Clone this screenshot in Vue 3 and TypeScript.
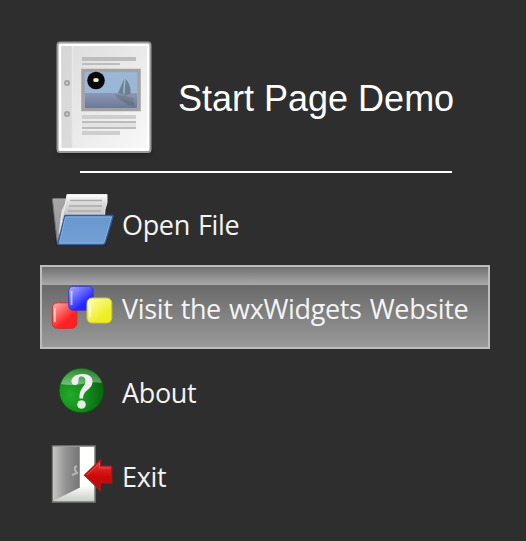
<script setup lang="ts">
type IconName = 'folder' | 'blocks' | 'help' | 'door'

interface StartItem {
  label: string
  icon: IconName
  active?: boolean
}

const items: StartItem[] = [
  { label: 'Open File', icon: 'folder' },
  { label: 'Visit the wxWidgets Website', icon: 'blocks', active: true },
  { label: 'About', icon: 'help' },
  { label: 'Exit', icon: 'door' },
]
</script>

<template>
  <main class="page">
    <header class="header">
      <svg class="logo" viewBox="50 34 108 126">
        <defs>
          <linearGradient id="paper" x1="0" y1="0" x2="1" y2="1">
            <stop offset="0" stop-color="#dcdcdc" />
            <stop offset="1" stop-color="#f8f8f8" />
          </linearGradient>
          <linearGradient id="sea" x1="0" y1="0" x2="0" y2="1">
            <stop offset="0" stop-color="#8c98b8" />
            <stop offset="1" stop-color="#6b7896" />
          </linearGradient>
          <filter id="soft" x="-20%" y="-80%" width="140%" height="260%">
            <feGaussianBlur stdDeviation="2.5" />
          </filter>
        </defs>
        <rect x="59" y="146" width="91" height="9" rx="4" fill="#1a1a1a" filter="url(#soft)" />
        <rect x="57.500" y="42.500" width="93" height="109.500" rx="2.5" fill="#fff" stroke="#999" stroke-width="2" />
        <rect x="61" y="46" width="86" height="102" fill="url(#paper)" />
        <path d="M62 46h10v102H62z" fill="#d2d2d2" opacity=".65" />
        <path d="M72.500 46v102" stroke="#e8e8e8" stroke-width="1.500" />
        <g fill="#dcdcdc" stroke="#a2a2a2" stroke-width="2">
          <circle cx="67" cy="83" r="2" />
          <circle cx="67" cy="114" r="2" />
        </g>
        <path d="M82 57h54v4H82zM82 63h38v2H82zM82 121h54v2H82zM82 127h54v2H82z" fill="#bdbdbd" />
        <path d="M82 115h54v4H82zM82 131h38v4H82z" fill="#cecece" />
        <path d="M82 123h54v4H82z" fill="#e3e3e3" />
        <rect x="83" y="70.500" width="56" height="39" fill="#9bb7d8" stroke="#a2a2a2" stroke-width="3.500" />
        <path d="M85 93h52v15H85z" fill="url(#sea)" />
        <path d="M124 79l-6 14 5 2zM125.500 79c4 4 5.500 9 5 15l-6 2zM114 94l20 4-3 5-11-3z" fill="#71808f" />
        <path d="M120 99l14 3v5l-6-2z" fill="#626f86" opacity=".8" />
        <circle cx="96" cy="80.500" r="8.800" fill="#080808" />
        <ellipse cx="96" cy="80" rx="2.800" ry="2" fill="#e8e8d0" />
      </svg>
      <h1 class="title">Start Page Demo</h1>
    </header>
    <hr class="rule" />

    <nav class="menu">
      <a v-for="item in items" :key="item.label" class="item" :class="{ active: item.active }">
        <svg v-if="item.icon === 'folder'" class="icon" viewBox="50 191 64 64">
          <defs>
            <linearGradient id="folder-back" x1="0" y1="0" x2="1" y2="1">
              <stop offset="0" stop-color="#aaa" />
              <stop offset="1" stop-color="#808080" />
            </linearGradient>
            <linearGradient id="sheet" x1="0" y1="0" x2="0" y2="1">
              <stop offset="0" stop-color="#fff" />
              <stop offset=".35" stop-color="#d8d8d8" />
              <stop offset="1" stop-color="#bbb" />
            </linearGradient>
            <linearGradient id="folder-front" x1="0" y1="0" x2="0" y2="1">
              <stop offset="0" stop-color="#6898cf" />
              <stop offset="1" stop-color="#739fd3" />
            </linearGradient>
          </defs>
          <path d="M56 246h50l2-8H55z" fill="#222" />
          <path d="M52.500 199.500q0-1 1-1h13v8l35 5v6l-42 27h-2z" fill="url(#folder-back)" stroke="#777" />
          <path d="M60 234l3-23 4-8" fill="none" stroke="#ddd" stroke-width="3" />
          <path d="M67 194.500h40l0 8-2 7-1 12H61l4-15z" fill="url(#sheet)" stroke="#eee" />
          <path d="M70 200.500h32M69 206h33M68 211h33" stroke="#aaa" stroke-width="1.500" />
          <path d="M65 215.500h47.500q.5 0 .3 1l-7.800 26.500q-.5 1.500-2 1.500H59q-1.500 0-1-1.500z" fill="url(#folder-front)" stroke="#315f9b" stroke-width="1.500" />
          <path d="M65.500 217h46l-7 24q-.5 2-2 2H59.500z" fill="none" stroke="#85addb" stroke-width="1" />
        </svg>

        <svg v-else-if="item.icon === 'blocks'" class="icon" viewBox="50 275 64 64">
          <defs>
            <linearGradient id="red" x1="0" y1="0" x2=".8" y2="1">
              <stop offset="0" stop-color="#ffb5b5" />
              <stop offset=".7" stop-color="#ff2222" />
            </linearGradient>
            <linearGradient id="blue" x1="0" y1="0" x2=".8" y2="1">
              <stop offset="0" stop-color="#b4b4ff" />
              <stop offset=".75" stop-color="#2525ff" />
            </linearGradient>
            <linearGradient id="yellow" x1="0" y1="0" x2=".8" y2="1">
              <stop offset="0" stop-color="#ffffb8" />
              <stop offset=".75" stop-color="#eeee24" />
            </linearGradient>
          </defs>
          <rect x="52.300" y="302.800" width="24.500" height="25.500" rx="5" fill="url(#red)" stroke="#d02c2c" />
          <path d="M54.800 308v14" stroke="#fff" stroke-width="1.800" opacity=".6" />
          <rect x="68.700" y="286.300" width="24.500" height="24" rx="4.500" fill="url(#blue)" stroke="#3c3cbd" />
          <path d="M71.500 291v14" stroke="#fff" stroke-width="1.800" opacity=".6" />
          <rect x="87" y="298" width="24.800" height="25" rx="5" fill="url(#yellow)" stroke="#c8c83c" />
          <path d="M90 303v14" stroke="#fff" stroke-width="1.800" opacity=".7" />
        </svg>

        <svg v-else-if="item.icon === 'help'" class="icon" viewBox="50 359 64 64">
          <defs>
            <radialGradient id="ball" cx=".25" cy=".6" r=".75">
              <stop offset="0" stop-color="#22ab28" />
              <stop offset=".5" stop-color="#168c1d" />
              <stop offset="1" stop-color="#09650f" />
            </radialGradient>
            <linearGradient id="shine" x1="0" y1="0" x2="0" y2="1">
              <stop offset="0" stop-color="#fff" stop-opacity=".12" />
              <stop offset="1" stop-color="#fff" stop-opacity=".4" />
            </linearGradient>
          </defs>
          <circle cx="81.500" cy="390.500" r="22.500" fill="url(#ball)" stroke="#16471a" />
          <path d="M61 384a21.500 21.500 0 0 1 41-1q-10-2-20 1-11 2-21 0z" fill="url(#shine)" />
          <path d="M71.500 380q2-6 11-6 10 0 10 7.500c0 4-2 6-5 8.500-3 2.500-4.500 4.500-4.500 8.500h-3.500c-.5-5 1-8 3-11 2-2.500 3-4 3-6.500 0-3-1.500-4.500-4-4.500-3 0-3 2-3 4.500s-1.500 4-3.500 4-4-1.500-3.500-5z" fill="#eeeeef" />
          <circle cx="81.500" cy="404.500" r="4.300" fill="#e4efe4" />
        </svg>

        <svg v-else class="icon" viewBox="50 443 64 64">
          <defs>
            <linearGradient id="leaf" x1="0" y1="0" x2="1" y2="0">
              <stop offset="0" stop-color="#c6c6c6" />
              <stop offset=".5" stop-color="#929292" />
              <stop offset="1" stop-color="#777" />
            </linearGradient>
            <linearGradient id="light" x1="0" y1="0" x2="0" y2="1">
              <stop offset=".7" stop-color="#fff" />
              <stop offset="1" stop-color="#c9cbc6" />
            </linearGradient>
            <linearGradient id="arrow" x1="0" y1="0" x2="0" y2="1">
              <stop offset="0" stop-color="#ee3a3a" />
              <stop offset=".55" stop-color="#cc0909" />
              <stop offset="1" stop-color="#b50b0b" />
            </linearGradient>
          </defs>
          <rect x="52.500" y="446" width="42.500" height="56" fill="url(#light)" stroke="#777973" stroke-width="1.500" />
          <path d="M53 447h26v41l-26 13z" fill="url(#leaf)" />
          <path d="M79 447v41" stroke="#747474" stroke-width="1.500" />
          <path d="M77 466q-3 1-2 4l2 3-5 2" fill="none" stroke="#b5b5b5" stroke-width="2" />
          <path d="M84.500 475.200l16-15.500v6.300h11.200v17h-11.200v7.500z" fill="url(#arrow)" stroke="#a51a1a" stroke-width="1.200" />
          <path d="M87 475l12.500-12v5h11" fill="none" stroke="#e34a4a" stroke-width="1" />
        </svg>
        <span class="label">{{ item.label }}</span>
      </a>
    </nav>
  </main>
</template>

<style>
body {
  margin: 0;
  background: #2e2e2e;
}
</style>

<style scoped>
.page {
  box-sizing: border-box;
  width: 526px;
  height: 541px;
  padding: 34px 36px 24px 40px;
  background: #2e2e2e;
  overflow: hidden;
}

.header {
  display: flex;
  height: 137px;
  padding-left: 10px;
}

.logo {
  flex: none;
  width: 108px;
  height: 126px;
}

.title {
  margin: 44px 0 0 20px;
  color: #fff;
  font: 400 36px/41px "Liberation Sans", Arial, sans-serif;
  white-space: nowrap;
}

.rule {
  width: 371.500px;
  height: 2px;
  margin: 0 0 8px 40px;
  border: 0;
  background: #fff;
}

.item {
  box-sizing: border-box;
  display: flex;
  align-items: center;
  width: 450px;
  height: 84px;
  padding: 0 8px;
  border: 2px solid transparent;
}

.item.active {
  border-color: #bdbdbd;
  background:
    linear-gradient(#707070, #aaa) top / 100% 18px no-repeat,
    linear-gradient(#5c5c5c, #999);
}

.icon {
  flex: none;
  width: 64px;
  height: 64px;
}

.label {
  padding: 4px 0 0 8px;
  color: #f4f4f4;
  font: 400 27px/38px "Open Sans", "Noto Sans", sans-serif;
  letter-spacing: -0.350px;
  word-spacing: 1.500px;
  white-space: nowrap;
}
</style>
